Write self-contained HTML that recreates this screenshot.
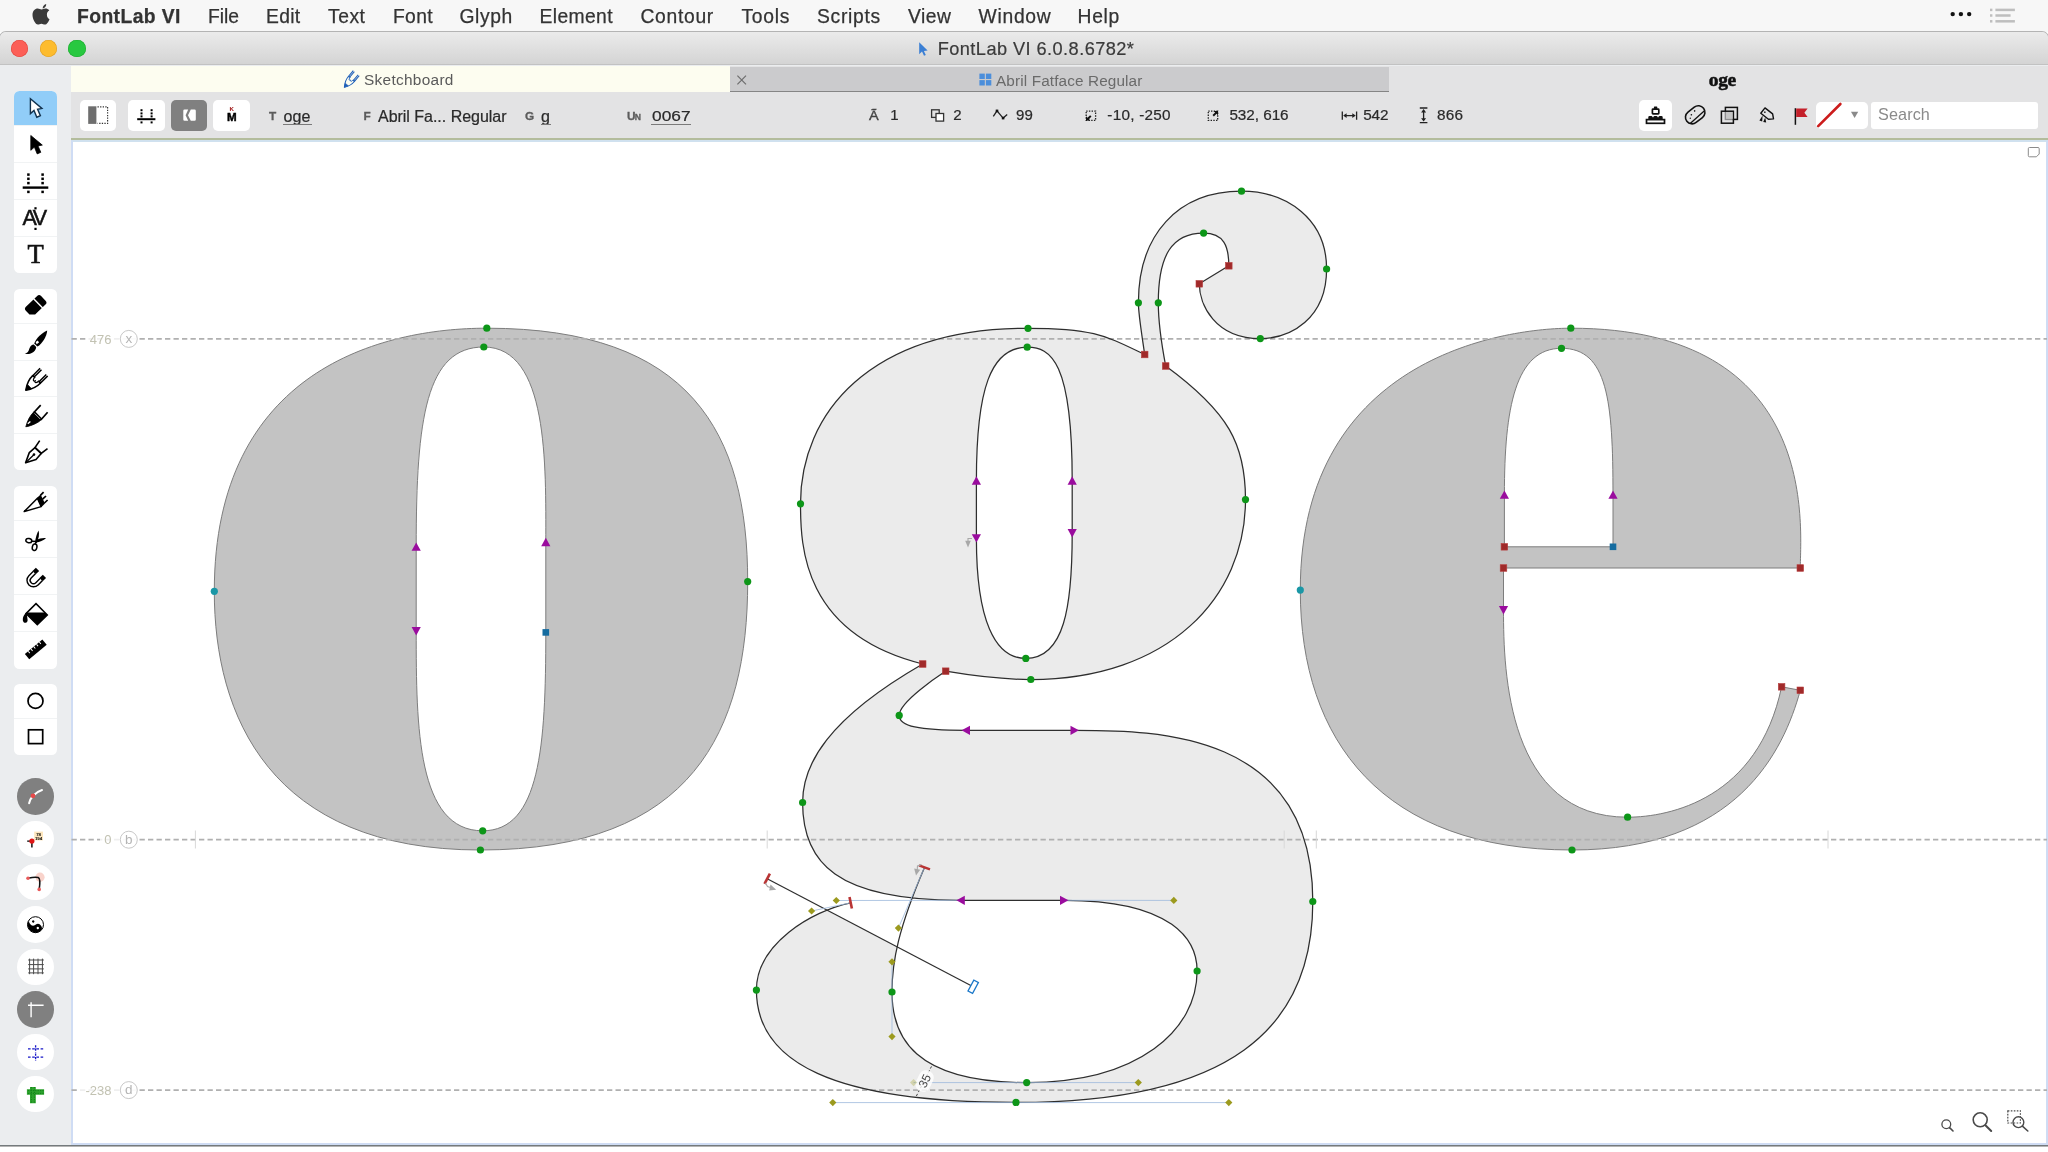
<!DOCTYPE html>
<html><head><meta charset="utf-8"><title>FontLab VI</title>
<style>
html,body{margin:0;padding:0;background:#fff;}
body{width:2048px;height:1152px;overflow:hidden;position:relative;font-family:"Liberation Sans",sans-serif;}
.a{position:absolute;}
.t{position:absolute;white-space:nowrap;}
svg{position:absolute;left:0;top:0;overflow:visible;}
.wb{position:absolute;background:#fff;}
</style></head><body>
<div id="root" style="position:absolute;left:0;top:0;width:2048px;height:1152px;will-change:transform;">

<div class="a" style="left:0;top:0;width:2048px;height:32px;background:#f7f7f7;"></div>
<span class="t " style="left:77.0px;top:4.8px;height:23.2px;line-height:23.2px;font-size:19.3px;color:#333;font-weight:bold;letter-spacing:0.430px;-webkit-text-stroke:0.25px #333;">FontLab VI</span>
<span class="t " style="left:208.0px;top:4.8px;height:23.2px;line-height:23.2px;font-size:19.3px;color:#333;letter-spacing:-0.025px;-webkit-text-stroke:0.25px #333;">File</span>
<span class="t " style="left:266.0px;top:4.8px;height:23.2px;line-height:23.2px;font-size:19.3px;color:#333;letter-spacing:0.311px;-webkit-text-stroke:0.25px #333;">Edit</span>
<span class="t " style="left:328.0px;top:4.8px;height:23.2px;line-height:23.2px;font-size:19.3px;color:#333;letter-spacing:0.526px;-webkit-text-stroke:0.25px #333;">Text</span>
<span class="t " style="left:393.0px;top:4.8px;height:23.2px;line-height:23.2px;font-size:19.3px;color:#333;letter-spacing:0.345px;-webkit-text-stroke:0.25px #333;">Font</span>
<span class="t " style="left:459.5px;top:4.8px;height:23.2px;line-height:23.2px;font-size:19.3px;color:#333;letter-spacing:0.616px;-webkit-text-stroke:0.25px #333;">Glyph</span>
<span class="t " style="left:539.5px;top:4.8px;height:23.2px;line-height:23.2px;font-size:19.3px;color:#333;letter-spacing:0.385px;-webkit-text-stroke:0.25px #333;">Element</span>
<span class="t " style="left:640.5px;top:4.8px;height:23.2px;line-height:23.2px;font-size:19.3px;color:#333;letter-spacing:0.691px;-webkit-text-stroke:0.25px #333;">Contour</span>
<span class="t " style="left:741.5px;top:4.8px;height:23.2px;line-height:23.2px;font-size:19.3px;color:#333;letter-spacing:0.689px;-webkit-text-stroke:0.25px #333;">Tools</span>
<span class="t " style="left:817.0px;top:4.8px;height:23.2px;line-height:23.2px;font-size:19.3px;color:#333;letter-spacing:0.717px;-webkit-text-stroke:0.25px #333;">Scripts</span>
<span class="t " style="left:908.0px;top:4.8px;height:23.2px;line-height:23.2px;font-size:19.3px;color:#333;letter-spacing:0.504px;-webkit-text-stroke:0.25px #333;">View</span>
<span class="t " style="left:978.5px;top:4.8px;height:23.2px;line-height:23.2px;font-size:19.3px;color:#333;letter-spacing:0.726px;-webkit-text-stroke:0.25px #333;">Window</span>
<span class="t " style="left:1077.5px;top:4.8px;height:23.2px;line-height:23.2px;font-size:19.3px;color:#333;letter-spacing:0.702px;-webkit-text-stroke:0.25px #333;">Help</span>
<div class="a" style="left:0;top:31.5px;width:2048px;height:1114.5px;background:#ebedef;border-radius:6px 6px 0 0;box-shadow:0 0 0 1px #b4b4b4;overflow:hidden;">
<div class="a" style="left:0;top:0;width:2048px;height:32px;background:linear-gradient(#ebebeb,#d4d4d4);border-bottom:1px solid #c2c2c2;"></div>
</div>
<div class="a" style="left:0;top:1145px;width:2048px;height:1.2px;background:#747a7c;"></div>
<div class="a" style="left:0;top:1146.5px;width:2048px;height:6px;background:#fff;"></div>
<div class="a" style="left:11.35px;top:39.55px;width:17.1px;height:17.1px;border-radius:50%;background:#fc5f57;box-shadow:inset 0 0 0 0.6px #e2463f;"></div>
<div class="a" style="left:39.85px;top:39.55px;width:17.1px;height:17.1px;border-radius:50%;background:#fdbc2e;box-shadow:inset 0 0 0 0.6px #e0a028;"></div>
<div class="a" style="left:68.45px;top:39.55px;width:17.1px;height:17.1px;border-radius:50%;background:#28c840;box-shadow:inset 0 0 0 0.6px #1fab31;"></div>
<span class="t " style="left:937.7px;top:39.2px;height:21.8px;line-height:21.8px;font-size:18.2px;color:#3a3a3a;letter-spacing:0.436px;-webkit-text-stroke:0.2px #3a3a3a;">FontLab VI 6.0.8.6782*</span>
<div class="a" style="left:71px;top:66.4px;width:1977px;height:25.6px;background:#e3e3e4;"></div>
<div class="a" style="left:71px;top:66.4px;width:658.5px;height:25.8px;background:#fdfdf0;"></div>
<div class="a" style="left:729.5px;top:67px;width:659.5px;height:24px;background:#cbcbcd;border-bottom:1.5px solid #858585;"></div>
<span class="t " style="left:364.0px;top:71.0px;height:18.5px;line-height:18.5px;font-size:15.4px;color:#5a5a5a;letter-spacing:0.294px;">Sketchboard</span>
<span class="t " style="left:996.0px;top:71.8px;height:18.4px;line-height:18.4px;font-size:15.3px;color:#6a6a6a;letter-spacing:0.133px;">Abril Fatface Regular</span>
<span class="t" style="left:1708.8px;top:67.6px;font-size:19.5px;line-height:24px;font-weight:bold;font-family:'Liberation Serif',serif;color:#111;letter-spacing:-0.35px;-webkit-text-stroke:0.55px #111;">oge</span>
<div class="a" style="left:71px;top:92px;width:1977px;height:46.5px;background:#e3e3e4;"></div>
<div class="a" style="left:79.8px;top:99.7px;width:36.6px;height:30.9px;border-radius:5px;background:#fff;"></div>
<div class="a" style="left:128px;top:99.7px;width:36.8px;height:30.9px;border-radius:5px;background:#fff;"></div>
<div class="a" style="left:170.8px;top:99.7px;width:36.6px;height:30.9px;border-radius:5px;background:#808080;"></div>
<div class="a" style="left:213.4px;top:99.7px;width:36.6px;height:30.9px;border-radius:5px;background:#fff;"></div>
<div class="a" style="left:1638.5px;top:99.5px;width:33.7px;height:31.2px;border-radius:5px;background:#fff;"></div>
<div class="a" style="left:1815.5px;top:102px;width:52.5px;height:26.8px;border-radius:5px;background:#fff;"></div>
<div class="a" style="left:1870.5px;top:101.5px;width:167.5px;height:27px;border-radius:3px;background:#fff;"></div>
<span class="t " style="left:1878.0px;top:105.3px;height:19.4px;line-height:19.4px;font-size:16.2px;color:#8a8a8a;letter-spacing:0.112px;">Search</span>
<span class="t " style="left:268.9px;top:109.4px;height:14.2px;line-height:14.2px;font-size:11.8px;color:#5c5c5c;font-weight:bold;-webkit-text-stroke:0.3px #5c5c5c;">T</span>
<span class="t " style="left:283.6px;top:107.2px;height:19.2px;line-height:19.2px;font-size:16px;color:#2a2a2a;letter-spacing:0.035px;-webkit-text-stroke:0.22px #2a2a2a;">oge</span>
<div class="a" style="left:283.2px;top:124px;width:28.4px;height:1px;background:#7a7a7a;"></div>
<span class="t " style="left:363.6px;top:109.4px;height:14.2px;line-height:14.2px;font-size:11.8px;color:#5c5c5c;font-weight:bold;-webkit-text-stroke:0.3px #5c5c5c;">F</span>
<span class="t " style="left:378.0px;top:107.2px;height:19.2px;line-height:19.2px;font-size:16px;color:#2a2a2a;letter-spacing:-0.023px;-webkit-text-stroke:0.22px #2a2a2a;">Abril Fa... Regular</span>
<span class="t " style="left:525.0px;top:109.4px;height:14.2px;line-height:14.2px;font-size:11.8px;color:#5c5c5c;font-weight:bold;-webkit-text-stroke:0.3px #5c5c5c;">G</span>
<span class="t " style="left:541.0px;top:107.2px;height:19.2px;line-height:19.2px;font-size:16px;color:#2a2a2a;-webkit-text-stroke:0.22px #2a2a2a;">g</span>
<div class="a" style="left:540.6px;top:124px;width:10px;height:1px;background:#7a7a7a;"></div>
<span class="t " style="left:627.0px;top:109.4px;height:14.2px;line-height:14.2px;font-size:11.8px;color:#5c5c5c;font-weight:bold;-webkit-text-stroke:0.3px #5c5c5c;">U</span>
<span class="t " style="left:634.8px;top:112.4px;height:10.3px;line-height:10.3px;font-size:8.6px;color:#5c5c5c;font-weight:bold;-webkit-text-stroke:0.3px #5c5c5c;">N</span>
<span class="t " style="left:651.7px;top:106.5px;height:18.2px;line-height:18.2px;font-size:15.2px;color:#2a2a2a;-webkit-text-stroke:0.22px #2a2a2a;transform:scaleX(1.14);transform-origin:0 50%;">0067</span>
<div class="a" style="left:651.2px;top:124px;width:40px;height:1px;background:#7a7a7a;"></div>
<span class="t " style="left:869.4px;top:107.8px;height:15.6px;line-height:15.6px;font-size:13px;color:#444;-webkit-text-stroke:0.35px #444;transform:scaleX(1.12);transform-origin:0 50%;">Ã</span>
<span class="t " style="left:890.3px;top:106.3px;height:18.0px;line-height:18.0px;font-size:15px;color:#2a2a2a;-webkit-text-stroke:0.22px #2a2a2a;">1</span>
<span class="t " style="left:953.2px;top:106.3px;height:18.0px;line-height:18.0px;font-size:15px;color:#2a2a2a;-webkit-text-stroke:0.22px #2a2a2a;">2</span>
<span class="t " style="left:1016.0px;top:106.3px;height:18.0px;line-height:18.0px;font-size:15px;color:#2a2a2a;letter-spacing:0.058px;-webkit-text-stroke:0.22px #2a2a2a;">99</span>
<span class="t " style="left:1107.3px;top:106.1px;height:18.4px;line-height:18.4px;font-size:15.3px;color:#2a2a2a;letter-spacing:0.251px;-webkit-text-stroke:0.22px #2a2a2a;">-10, -250</span>
<span class="t " style="left:1229.4px;top:106.1px;height:18.4px;line-height:18.4px;font-size:15.3px;color:#2a2a2a;letter-spacing:-0.045px;-webkit-text-stroke:0.22px #2a2a2a;">532, 616</span>
<span class="t " style="left:1363.2px;top:106.1px;height:18.4px;line-height:18.4px;font-size:15.3px;color:#2a2a2a;letter-spacing:-0.109px;-webkit-text-stroke:0.22px #2a2a2a;">542</span>
<span class="t " style="left:1437.0px;top:106.1px;height:18.4px;line-height:18.4px;font-size:15.3px;color:#2a2a2a;letter-spacing:0.224px;-webkit-text-stroke:0.22px #2a2a2a;">866</span>
<div class="a" style="left:71px;top:139px;width:1977px;height:1006px;background:#fff;box-sizing:border-box;border:2.9px solid #cfdcf4;border-top:3px solid #d0e1ef;"></div>
<div class="a" style="left:71px;top:138px;width:1977px;height:1.5px;background:#b3bc9c;"></div>
<svg width="2048" height="1152" viewBox="0 0 2048 1152" style="font-family:'Liberation Sans',sans-serif">
<path d="M214.3,591.3C214.3,369.7 381.9,328.2 486.8,328.2C690.8,328.2 747.7,433.2 747.7,581.6C747.7,729.9 693.2,850.0 480.4,850.0C269.9,850.0 214.3,715.4 214.3,591.3ZM483.8,347.0C548.7,347.0 545.8,465.7 545.8,542.0L545.8,632.4C545.8,746.1 540.1,830.8 482.7,830.8C417.1,830.8 416.2,727.2 416.2,631.2L416.2,546.6C416.2,417.9 426.2,347.0 483.8,347.0Z" fill="#c3c3c3" stroke="#7d7d7d" stroke-width="1" fill-rule="evenodd"/>
<path d="M1800.3,568.0C1800.3,528.1 1821.7,328.2 1570.8,328.2C1513.2,328.2 1300.3,352.1 1300.3,590.1C1300.3,741.4 1383.0,850.0 1572.0,850.0C1737.1,850.0 1783.6,751.1 1800.3,690.3L1781.6,686.8C1758.1,798.7 1669.7,817.2 1627.6,817.2C1507.2,817.2 1503.5,671.4 1503.5,610.3L1503.5,568.0L1800.3,568.0ZM1504.4,546.8L1504.4,494.6C1504.4,407.9 1515.3,348.3 1561.5,348.3C1607.6,348.3 1613.0,400.9 1613.0,494.6L1613.0,546.8L1504.4,546.8Z" fill="#c3c3c3" stroke="#7d7d7d" stroke-width="1" fill-rule="evenodd"/>
<path d="M827.0,910.1C792.5,924.1 756.4,952.8 756.4,990.1C756.4,1062.3 832.8,1102.6 1016.0,1102.4C1228.8,1102.6 1312.8,1029.3 1312.8,901.5C1312.8,731.2 1156.5,730.3 1074.7,730.3L965.8,730.3C918.6,730.3 899.2,726.2 899.2,715.4C899.2,700.8 945.5,671.4 945.7,671.2C972.3,675.7 1002.9,679.5 1030.8,679.5C1168.7,679.5 1245.5,597.2 1245.5,499.6C1245.5,444.4 1228.7,412.1 1165.7,366.0C1162.1,347.2 1158.3,319.4 1158.3,302.8C1158.3,255.7 1171.6,233.1 1203.6,233.1C1223.9,233.1 1228.8,246.1 1228.8,265.8L1199.3,283.8C1199.3,304.1 1214.7,338.6 1260.3,338.6C1290.2,338.6 1326.6,319.0 1326.6,269.0C1326.6,219.5 1287.3,191.2 1241.5,191.2C1177.5,191.2 1138.4,235.1 1138.4,302.8C1138.4,313.6 1139.7,320.4 1144.7,354.5C1106.2,336.1 1094.7,328.3 1028.0,328.3C869.2,328.3 800.5,413.9 800.5,503.8C800.5,546.2 802.7,634.0 922.7,664.0C826.9,719.2 802.6,764.9 802.6,802.5C802.6,862.6 836.3,900.5 960.6,900.3L1064.2,900.3C1173.8,900.4 1197.1,940.8 1197.1,971.0C1197.1,1030.3 1138.3,1082.6 1026.7,1082.6C913.6,1082.6 892.0,1036.6 892.0,992.0C892.0,978.4 893.3,964.1 897.1,946.9ZM1027.2,347.2C1050.7,347.2 1072.2,361.2 1072.2,480.5L1072.2,533.2C1072.2,607.1 1064.2,658.4 1025.8,658.4C994.8,658.4 976.4,619.8 976.4,538.4L976.4,480.5C976.4,389.3 990.6,347.2 1027.2,347.2Z" fill="#ebebeb" stroke="none" fill-rule="evenodd"/>
<path d="M71.5,338.9H2047" stroke="#b0b0b0" stroke-width="1.8" stroke-dasharray="5.3,3.2" fill="none"/>
<path d="M71.5,839.7H2047" stroke="#b0b0b0" stroke-width="1.8" stroke-dasharray="5.3,3.2" fill="none"/>
<path d="M71.5,1090.1H2047" stroke="#b0b0b0" stroke-width="1.8" stroke-dasharray="5.3,3.2" fill="none"/>
<path d="M195.4,830.5V848.5" stroke="#d8d8d8" stroke-width="1"/>
<path d="M767.2,830.5V848.5" stroke="#d8d8d8" stroke-width="1"/>
<path d="M1284.2,830.5V848.5" stroke="#d8d8d8" stroke-width="1"/>
<path d="M1316.3,830.5V848.5" stroke="#d8d8d8" stroke-width="1"/>
<path d="M1828,830.5V848.5" stroke="#d8d8d8" stroke-width="1"/>
<path d="M850.7,902.8C811.6,911.0 756.4,944.0 756.4,990.1C756.4,1062.3 832.8,1102.6 1016.0,1102.4C1228.8,1102.6 1312.8,1029.3 1312.8,901.5C1312.8,731.2 1156.5,730.3 1074.7,730.3L965.8,730.3C918.6,730.3 899.2,726.2 899.2,715.4C899.2,700.8 945.5,671.4 945.7,671.2C972.3,675.7 1002.9,679.5 1030.8,679.5C1168.7,679.5 1245.5,597.2 1245.5,499.6C1245.5,444.4 1228.7,412.1 1165.7,366.0C1162.1,347.2 1158.3,319.4 1158.3,302.8C1158.3,255.7 1171.6,233.1 1203.6,233.1C1223.9,233.1 1228.8,246.1 1228.8,265.8L1199.3,283.8C1199.3,304.1 1214.7,338.6 1260.3,338.6C1290.2,338.6 1326.6,319.0 1326.6,269.0C1326.6,219.5 1287.3,191.2 1241.5,191.2C1177.5,191.2 1138.4,235.1 1138.4,302.8C1138.4,313.6 1139.7,320.4 1144.7,354.5C1106.2,336.1 1094.7,328.3 1028.0,328.3C869.2,328.3 800.5,413.9 800.5,503.8C800.5,546.2 802.7,634.0 922.7,664.0C826.9,719.2 802.6,764.9 802.6,802.5C802.6,862.6 836.3,900.5 960.6,900.3L1064.2,900.3C1173.8,900.4 1197.1,940.8 1197.1,971.0C1197.1,1030.3 1138.3,1082.6 1026.7,1082.6C913.6,1082.6 892.0,1036.6 892.0,992.0C892.0,961.8 898.4,928.1 924.5,867.4" fill="none" stroke="#2e2e2e" stroke-width="1.25" stroke-linejoin="round"/>
<path d="M1027.2,347.2C1050.7,347.2 1072.2,361.2 1072.2,480.5L1072.2,533.2C1072.2,607.1 1064.2,658.4 1025.8,658.4C994.8,658.4 976.4,619.8 976.4,538.4L976.4,480.5C976.4,389.3 990.6,347.2 1027.2,347.2Z" fill="none" stroke="#2e2e2e" stroke-width="1.25"/>
<path d="M767.2,878.8L973.2,986.7" fill="none" stroke="#2e2e2e" stroke-width="1.25"/>
<rect x="86.5" y="331.9" width="51.5" height="14" fill="#fff" opacity="0.8"/>
<text x="111.5" y="343.5" font-size="13" fill="#c2c2b2" text-anchor="end">476</text>
<circle cx="128.8" cy="338.9" r="8.5" fill="#fff" fill-opacity="0.7" stroke="#c8c8c8" stroke-width="1"/>
<text x="128.8" y="343.09999999999997" font-size="13.5" fill="#b4b4b4" text-anchor="middle">x</text>
<rect x="100" y="832.7" width="38" height="14" fill="#fff" opacity="0.8"/>
<text x="111.5" y="844.3000000000001" font-size="13" fill="#c2c2b2" text-anchor="end">0</text>
<circle cx="128.8" cy="839.7" r="8.5" fill="#fff" fill-opacity="0.7" stroke="#c8c8c8" stroke-width="1"/>
<text x="128.8" y="843.9000000000001" font-size="13.5" fill="#b4b4b4" text-anchor="middle">b</text>
<rect x="78" y="1083.1" width="60" height="14" fill="#fff" opacity="0.8"/>
<text x="111.5" y="1094.6999999999998" font-size="13" fill="#c2c2b2" text-anchor="end">-238</text>
<circle cx="128.8" cy="1090.1" r="8.5" fill="#fff" fill-opacity="0.7" stroke="#c8c8c8" stroke-width="1"/>
<text x="128.8" y="1094.3" font-size="13.5" fill="#b4b4b4" text-anchor="middle">d</text>
<path d="M850.7,902.8L811.6,911" stroke="#9db9dc" stroke-width="1" opacity="0.8"/>
<path d="M960.6,900.3L836.3,900.5" stroke="#9db9dc" stroke-width="1" opacity="0.8"/>
<path d="M1064.2,900.3L1173.8,900.4" stroke="#9db9dc" stroke-width="1" opacity="0.8"/>
<path d="M924.5,867.4L898.4,928.1" stroke="#9db9dc" stroke-width="1" opacity="0.8"/>
<path d="M892,961.8L892,1036.6" stroke="#9db9dc" stroke-width="1" opacity="0.8"/>
<path d="M913.6,1082.6L1138.3,1082.6" stroke="#9db9dc" stroke-width="1" opacity="0.8"/>
<path d="M832.8,1102.6L1228.8,1102.6" stroke="#9db9dc" stroke-width="1" opacity="0.8"/>
<path d="M916.4,1096L931.8,1065.8" stroke="#444" stroke-width="1" stroke-dasharray="2.4,2"/>
<g transform="translate(924.6,1081) rotate(-64)"><rect x="-11" y="-7.5" width="22" height="15" rx="7" fill="#fff" fill-opacity="0.8"/><text x="0" y="4.2" font-size="12" fill="#4a4a4a" text-anchor="middle">35</text></g>
<path d="M808.0,911L811.6,907.4L815.2,911L811.6,914.6Z" fill="#9c9a1e" opacity="1"/>
<path d="M832.6999999999999,900.5L836.3,896.9L839.9,900.5L836.3,904.1Z" fill="#9c9a1e" opacity="1"/>
<path d="M1170.2,900.4L1173.8,896.8L1177.3999999999999,900.4L1173.8,904.0Z" fill="#9c9a1e" opacity="1"/>
<path d="M894.8,928.1L898.4,924.5L902.0,928.1L898.4,931.7Z" fill="#9c9a1e" opacity="1"/>
<path d="M888.4,961.8L892,958.1999999999999L895.6,961.8L892,965.4Z" fill="#9c9a1e" opacity="1"/>
<path d="M888.4,1036.6L892,1033.0L895.6,1036.6L892,1040.1999999999998Z" fill="#9c9a1e" opacity="1"/>
<path d="M910.0,1082.6L913.6,1079.0L917.2,1082.6L913.6,1086.1999999999998Z" fill="#9c9a1e" opacity="0.3"/>
<path d="M1134.7,1082.6L1138.3,1079.0L1141.8999999999999,1082.6L1138.3,1086.1999999999998Z" fill="#9c9a1e" opacity="1"/>
<path d="M829.1999999999999,1102.6L832.8,1099.0L836.4,1102.6L832.8,1106.1999999999998Z" fill="#9c9a1e" opacity="1"/>
<path d="M1225.2,1102.6L1228.8,1099.0L1232.3999999999999,1102.6L1228.8,1106.1999999999998Z" fill="#9c9a1e" opacity="1"/>
<circle cx="486.8" cy="328.2" r="3.6" fill="#0d9618"/>
<circle cx="480.4" cy="850" r="3.6" fill="#0d9618"/>
<circle cx="747.7" cy="581.6" r="3.6" fill="#0d9618"/>
<circle cx="483.8" cy="347" r="3.6" fill="#0d9618"/>
<circle cx="482.7" cy="830.8" r="3.6" fill="#0d9618"/>
<circle cx="1028" cy="328.3" r="3.6" fill="#0d9618"/>
<circle cx="800.5" cy="503.8" r="3.6" fill="#0d9618"/>
<circle cx="1030.8" cy="679.5" r="3.6" fill="#0d9618"/>
<circle cx="1245.5" cy="499.6" r="3.6" fill="#0d9618"/>
<circle cx="1027.2" cy="347.2" r="3.6" fill="#0d9618"/>
<circle cx="1025.8" cy="658.4" r="3.6" fill="#0d9618"/>
<circle cx="1138.4" cy="302.8" r="3.6" fill="#0d9618"/>
<circle cx="1158.3" cy="302.8" r="3.6" fill="#0d9618"/>
<circle cx="1203.6" cy="233.1" r="3.6" fill="#0d9618"/>
<circle cx="1241.5" cy="191.2" r="3.6" fill="#0d9618"/>
<circle cx="1326.6" cy="269" r="3.6" fill="#0d9618"/>
<circle cx="1260.3" cy="338.6" r="3.6" fill="#0d9618"/>
<circle cx="899.2" cy="715.4" r="3.6" fill="#0d9618"/>
<circle cx="802.6" cy="802.5" r="3.6" fill="#0d9618"/>
<circle cx="756.4" cy="990.1" r="3.6" fill="#0d9618"/>
<circle cx="1016" cy="1102.4" r="3.6" fill="#0d9618"/>
<circle cx="1312.8" cy="901.5" r="3.6" fill="#0d9618"/>
<circle cx="1197.1" cy="971" r="3.6" fill="#0d9618"/>
<circle cx="1026.7" cy="1082.6" r="3.6" fill="#0d9618"/>
<circle cx="892" cy="992" r="3.6" fill="#0d9618"/>
<circle cx="1570.8" cy="328.2" r="3.6" fill="#0d9618"/>
<circle cx="1572" cy="850" r="3.6" fill="#0d9618"/>
<circle cx="1561.5" cy="348.3" r="3.6" fill="#0d9618"/>
<circle cx="1627.6" cy="817.2" r="3.6" fill="#0d9618"/>
<circle cx="214.3" cy="591.3" r="3.6" fill="#1a97a6"/>
<circle cx="1300.3" cy="590.1" r="3.6" fill="#1a97a6"/>
<rect x="1141.4" y="351.2" width="6.6" height="6.6" fill="#a02a2a" stroke="#b84040" stroke-width="0.6"/>
<rect x="1162.4" y="362.7" width="6.6" height="6.6" fill="#a02a2a" stroke="#b84040" stroke-width="0.6"/>
<rect x="1225.5" y="262.5" width="6.6" height="6.6" fill="#a02a2a" stroke="#b84040" stroke-width="0.6"/>
<rect x="1196.0" y="280.5" width="6.6" height="6.6" fill="#a02a2a" stroke="#b84040" stroke-width="0.6"/>
<rect x="919.4" y="660.7" width="6.6" height="6.6" fill="#a02a2a" stroke="#b84040" stroke-width="0.6"/>
<rect x="942.4" y="667.9" width="6.6" height="6.6" fill="#a02a2a" stroke="#b84040" stroke-width="0.6"/>
<rect x="1501.1" y="543.5" width="6.6" height="6.6" fill="#a02a2a" stroke="#b84040" stroke-width="0.6"/>
<rect x="1500.2" y="564.7" width="6.6" height="6.6" fill="#a02a2a" stroke="#b84040" stroke-width="0.6"/>
<rect x="1797.0" y="564.7" width="6.6" height="6.6" fill="#a02a2a" stroke="#b84040" stroke-width="0.6"/>
<rect x="1778.3" y="683.5" width="6.6" height="6.6" fill="#a02a2a" stroke="#b84040" stroke-width="0.6"/>
<rect x="1797.0" y="687.0" width="6.6" height="6.6" fill="#a02a2a" stroke="#b84040" stroke-width="0.6"/>
<rect x="542.5" y="629.1" width="6.6" height="6.6" fill="#156ca0"/>
<rect x="1609.7" y="543.5" width="6.6" height="6.6" fill="#156ca0"/>
<path d="M411.59999999999997,550.8000000000001L420.8,550.8000000000001L416.2,542.4Z" fill="#9a0c9e"/>
<path d="M411.59999999999997,627.0L420.8,627.0L416.2,635.4000000000001Z" fill="#9a0c9e"/>
<path d="M541.1999999999999,546.2L550.4,546.2L545.8,537.8Z" fill="#9a0c9e"/>
<path d="M971.8,484.7L981.0,484.7L976.4,476.3Z" fill="#9a0c9e"/>
<path d="M971.8,534.1999999999999L981.0,534.1999999999999L976.4,542.6Z" fill="#9a0c9e"/>
<path d="M1067.6000000000001,484.7L1076.8,484.7L1072.2,476.3Z" fill="#9a0c9e"/>
<path d="M1067.6000000000001,529.0L1076.8,529.0L1072.2,537.4000000000001Z" fill="#9a0c9e"/>
<path d="M970.0,725.6999999999999L970.0,734.9L961.5999999999999,730.3Z" fill="#9a0c9e"/>
<path d="M1070.5,725.6999999999999L1070.5,734.9L1078.9,730.3Z" fill="#9a0c9e"/>
<path d="M964.8000000000001,895.6999999999999L964.8000000000001,904.9L956.4,900.3Z" fill="#9a0c9e"/>
<path d="M1060.0,895.6999999999999L1060.0,904.9L1068.4,900.3Z" fill="#9a0c9e"/>
<path d="M1499.8000000000002,498.8L1509.0,498.8L1504.4,490.40000000000003Z" fill="#9a0c9e"/>
<path d="M1608.4,498.8L1617.6,498.8L1613,490.40000000000003Z" fill="#9a0c9e"/>
<path d="M1498.9,606.0999999999999L1508.1,606.0999999999999L1503.5,614.5Z" fill="#9a0c9e"/>
<path d="M849.5,897.1L851.9,908.5" stroke="#b93434" stroke-width="2.6"/>
<path d="M919.0,865.4L930.0,869.4" stroke="#b93434" stroke-width="2.6"/>
<path d="M764.5,883.9L769.9,873.7" stroke="#b93434" stroke-width="2.6"/>
<path d="M765.5,883L767.5,886.5L772,888" stroke="#a8a8a8" stroke-width="1.1" fill="none"/><path d="M770.5,884.6L776.2,889.8L769.2,890.5Z" fill="#a8a8a8"/>
<path d="M921.5,864.5L917.5,866L917.2,870" stroke="#a8a8a8" stroke-width="1.1" fill="none"/><path d="M914.2,868.5L920.2,869.8L916,875.5Z" fill="#a8a8a8"/>
<path d="M972,538.5H968V542" stroke="#a8a8a8" stroke-width="1.1" fill="none"/><path d="M965.2,540.8H970.8L968,547.5Z" fill="#a8a8a8"/>
<g transform="translate(973.2,986.7) rotate(-62)"><rect x="-6.2" y="-2.6" width="12.4" height="5.2" fill="#fff" stroke="#1b78c9" stroke-width="1.3"/></g>
<path d="M2029.5,147.5h8.5a1.2,1.2 0 0 1 1.2,1.2v5.3l-2.8,2.8h-6.9a1.2,1.2 0 0 1 -1.2,-1.2v-6.9a1.2,1.2 0 0 1 1.2,-1.2z" fill="#fff" stroke="#8a8a8a" stroke-width="1"/>
<g fill="none" stroke="#4a4a4a" stroke-linecap="round"><circle cx="1946.3" cy="1124.2" r="4.4" stroke-width="1.3"/><path d="M1949.6,1127.6L1953,1131" stroke-width="1.6"/><circle cx="1980.2" cy="1119.8" r="7" stroke-width="1.6"/><path d="M1985.4,1125.2L1991.2,1131" stroke-width="2"/><rect x="2007.8" y="1110.8" width="12.6" height="12.2" stroke-width="1.2" stroke-dasharray="1.6,1.4" stroke-linecap="butt"/><circle cx="2018.4" cy="1122.2" r="5.4" stroke-width="1.4"/><path d="M2022.4,1126.2L2027.8,1131" stroke-width="1.6"/></g>
</svg>
<div class="a" style="left:14.3px;top:90.8px;width:42.7px;height:182.2px;background:#fff;border-radius:5.5px;overflow:hidden;">
<div class="a" style="left:0;top:0;width:43px;height:34.4px;background:#91cdf8;"></div>
<div class="a" style="left:0;top:33.9px;width:43px;height:1px;background:#f1f3f4;"></div>
<div class="a" style="left:0;top:70.8px;width:43px;height:1px;background:#f1f3f4;"></div>
<div class="a" style="left:0;top:107.8px;width:43px;height:1px;background:#f1f3f4;"></div>
<div class="a" style="left:0;top:144.8px;width:43px;height:1px;background:#f1f3f4;"></div>
</div>
<div class="a" style="left:14.3px;top:288.9px;width:42.7px;height:181.6px;background:#fff;border-radius:5.5px;overflow:hidden;">
<div class="a" style="left:0;top:33.9px;width:43px;height:1px;background:#f1f3f4;"></div>
<div class="a" style="left:0;top:70.7px;width:43px;height:1px;background:#f1f3f4;"></div>
<div class="a" style="left:0;top:107.5px;width:43px;height:1px;background:#f1f3f4;"></div>
<div class="a" style="left:0;top:144.3px;width:43px;height:1px;background:#f1f3f4;"></div>
</div>
<div class="a" style="left:14.3px;top:486.1px;width:42.7px;height:182.5px;background:#fff;border-radius:5.5px;overflow:hidden;">
<div class="a" style="left:0;top:33.9px;width:43px;height:1px;background:#f1f3f4;"></div>
<div class="a" style="left:0;top:70.9px;width:43px;height:1px;background:#f1f3f4;"></div>
<div class="a" style="left:0;top:107.9px;width:43px;height:1px;background:#f1f3f4;"></div>
<div class="a" style="left:0;top:145.0px;width:43px;height:1px;background:#f1f3f4;"></div>
</div>
<div class="a" style="left:14.3px;top:683.9px;width:42.7px;height:71.1px;background:#fff;border-radius:5.5px;overflow:hidden;">
<div class="a" style="left:0;top:33.9px;width:43px;height:1px;background:#f1f3f4;"></div>
</div>
<div class="a" style="left:17.2px;top:778.0px;width:36.6px;height:36.6px;border-radius:50%;background:#808080;"></div>
<div class="a" style="left:17.2px;top:820.9px;width:36.6px;height:36.6px;border-radius:50%;background:#fff;"></div>
<div class="a" style="left:17.2px;top:863.5px;width:36.6px;height:36.6px;border-radius:50%;background:#fff;"></div>
<div class="a" style="left:17.2px;top:906.2px;width:36.6px;height:36.6px;border-radius:50%;background:#fff;"></div>
<div class="a" style="left:17.2px;top:948.9px;width:36.6px;height:36.6px;border-radius:50%;background:#fff;"></div>
<div class="a" style="left:17.2px;top:991.3px;width:36.6px;height:36.6px;border-radius:50%;background:#808080;"></div>
<div class="a" style="left:17.2px;top:1033.7px;width:36.6px;height:36.6px;border-radius:50%;background:#fff;"></div>
<div class="a" style="left:17.2px;top:1075.7px;width:36.6px;height:36.6px;border-radius:50%;background:#fff;"></div>
<span class="t" style="left:22.4px;top:206.4px;font-size:21.5px;line-height:24px;letter-spacing:-2.3px;color:#111;-webkit-text-stroke:0.5px #111;">AV</span>
<span class="t" style="left:27.4px;top:239.2px;font-size:26.5px;line-height:30px;font-family:'Liberation Serif',serif;color:#111;-webkit-text-stroke:0.7px #111;">T</span>
<svg width="72" height="1152" viewBox="0 0 72 1152">
<path d="M30.4,98.8V113.6L34,110.4L36.8,117.2L40.4,115.6L37.6,109.2L41.9,108.4Z" fill="#fff" stroke="#12324e" stroke-width="1.4" stroke-linejoin="miter"/>
<path d="M30.4,98.8V113.6L34,110.4L36.8,117.2L40.4,115.6L37.6,109.2L41.9,108.4Z" transform="translate(0.4,36.7)" fill="#000" stroke="#000" stroke-width="0.8"/>
<path d="M22.7,187.6H48.3" stroke="#000" stroke-width="2.4"/>
<rect x="27.15" y="173.35" width="2.5" height="2.5" fill="#000"/>
<rect x="27.15" y="177.55" width="2.5" height="2.5" fill="#000"/>
<rect x="27.15" y="181.85" width="2.5" height="2.5" fill="#000"/>
<rect x="27.15" y="190.65" width="2.5" height="2.5" fill="#000"/>
<rect x="41.35" y="173.35" width="2.5" height="2.5" fill="#000"/>
<rect x="41.35" y="177.55" width="2.5" height="2.5" fill="#000"/>
<rect x="41.35" y="181.85" width="2.5" height="2.5" fill="#000"/>
<rect x="41.35" y="190.65" width="2.5" height="2.5" fill="#000"/>
<rect x="34.4" y="207.20000000000002" width="2.2" height="2.2" fill="#000"/>
<rect x="34.4" y="227.8" width="2.2" height="2.2" fill="#000"/>
<g transform="translate(35.7,305.7) rotate(-44)"><path d="M-10.6,-3.2a2.8,2.8 0 0 1 2.8,-2.8h15.6a2.8,2.8 0 0 1 2.8,2.8v6.4a2.8,2.8 0 0 1 -2.8,2.8h-14.4l-4,-4z" fill="#000"/><path d="M3.4,-6.5V6.5" stroke="#fff" stroke-width="1.4"/></g>
<path d="M47.2,330.4C46.8,336.5 42.2,343.6 37.4,346.6L34.2,343.4C36.2,338 42,332.6 47.2,330.4Z" fill="#000"/>
<path d="M35.6,342L37.8,340.4L39,342.6L36.6,344.2Z" fill="#fff"/>
<path d="M33.8,344.6L36.2,347C35.8,351.5 31,355.2 24.6,353.8C28.5,352.8 28.6,350.5 29.5,348.2C30.3,346 32,344.8 33.8,344.6Z" fill="#000"/>
<g transform="translate(25.8,390.2) rotate(-45) scale(1.0)" fill="none" stroke="#000" stroke-linecap="butt"><path d="M15.5,-5.4C9.5,-5.6 3.5,-2.6 0,0C3.5,2.6 9.5,5.6 15.5,5.4" stroke-width="1.5" stroke-linejoin="round"/><path d="M0,0L5.2,-2.7V2.7Z" fill="#000" stroke-width="0.6"/><path d="M14.5,-4.4H25.6M14.5,4.4H25.6" stroke-width="3.4"/><path d="M16.5,-4.4H26M16.5,4.4H26" stroke="#fff" stroke-width="0.7"/><path d="M16,-2.6C12.5,-3 11,-1 13.2,0C11,1 12.5,3 16,2.6" stroke-width="1.2"/></g>
<path d="M25.8,426.8C27.4,420.6 30.2,415.4 33.9,411.8L41.6,419.4C38,423 32,425.6 25.8,426.8Z" fill="#000" stroke="#000" stroke-width="0.8" stroke-linejoin="round"/>
<path d="M40.7,405.2L34.4,411.9L41.4,419.2L47.6,412.2" fill="none" stroke="#000" stroke-width="1.7" stroke-linejoin="miter"/>
<path d="M27.8,423.8L30.4,421.4" stroke="#fff" stroke-width="1.3"/>
<path d="M34.6,413.4L40.2,419" stroke="#fff" stroke-width="0.7"/>
<path d="M25.6,462.7L29.3,452.6L35,447.6L41.2,453.4L36,459.4Z" fill="#fff" stroke="#000" stroke-width="1.6" stroke-linejoin="round"/>
<path d="M25.6,462.7L33.6,455" stroke="#000" stroke-width="1.3"/><circle cx="34" cy="454.6" r="1.3" fill="#000"/>
<path d="M39.7,440.6L35,447.6L41.2,453.4L47.5,448.6" fill="none" stroke="#000" stroke-width="1.6"/>
<path d="M24.2,511.6L37.4,498.2L41.2,506.6Z" fill="#fff" stroke="#000" stroke-width="1.5" stroke-linejoin="round"/>
<path d="M36.9,497.9L40.6,494.6L45,503.4L41.5,507Z" fill="#000"/>
<path d="M40.4,495.4L43.6,492.2M42.6,499.2L46,496M44.4,503L47.6,500" stroke="#000" stroke-width="1.7"/>
<path d="M35,542.5C35.5,538 36.8,533.5 38.6,530.4C39.6,534 38.6,539 36.6,543Z" fill="#000"/>
<path d="M36.2,540.2C39,538.6 43,537.8 46,538.2C43.6,540.6 39.6,542 36.2,542.4Z" fill="#000"/>
<ellipse cx="28.8" cy="540.6" rx="3" ry="2.1" transform="rotate(12 28.8 540.6)" fill="#fff" stroke="#000" stroke-width="1.5"/>
<ellipse cx="34.6" cy="547.2" rx="2.3" ry="3.3" transform="rotate(12 34.6 547.2)" fill="#fff" stroke="#000" stroke-width="1.5"/>
<path d="M31.6,541.2L36.5,541.5L35,544.2" fill="none" stroke="#000" stroke-width="1.4"/>
<g transform="translate(34.2,579.6) rotate(45)"><path d="M-4.9,-5V1A4.9,4.9 0 0 0 4.9,1V-5" fill="none" stroke="#000" stroke-width="4.6"/><path d="M-4.9,-5.2V1A4.9,4.9 0 0 0 4.9,1V-5.2" fill="none" stroke="#fff" stroke-width="1.8"/><rect x="-7.2" y="-9.6" width="4.6" height="4.8" fill="#000"/><rect x="2.6" y="-9.6" width="4.6" height="4.8" fill="#000"/></g>
<path d="M36,603.6L47.3,615L37.3,624.8L26,613.6Z" fill="#fff" stroke="#000" stroke-width="1.5" stroke-linejoin="miter"/>
<path d="M26.6,612.6H45L47.3,615L37.3,624.8L26,613.6Z" fill="#000"/>
<path d="M26.2,612.8C24,614.5 22.6,617.5 22.8,620.2C23,622 24.4,623 25.6,622.8C27,622.6 27.8,621.4 27.6,619.8C27.4,617.6 26.8,615.5 27.2,613.2Z" fill="#000"/>
<g transform="translate(35.8,649.4) rotate(-40)"><rect x="-11.4" y="-3.4" width="22.8" height="6.8" fill="#000"/><path d="M-7,-3.4v2.4M-3.4,-3.4v2.4M0.2,-3.4v2.4M3.8,-3.4v2.4M7.4,-3.4v2.4" stroke="#fff" stroke-width="1"/></g>
<circle cx="35.5" cy="700.9" r="7.5" fill="none" stroke="#000" stroke-width="1.7"/>
<rect x="28.5" y="729.8" width="14.2" height="13.8" fill="none" stroke="#000" stroke-width="1.7"/>
<path d="M29.1,803.2C30,798.5 34.5,792.5 42,790" fill="none" stroke="#fff" stroke-width="2" stroke-linecap="round"/><circle cx="33" cy="795.8" r="2.4" fill="#e84a4a"/>
<rect x="34.2" y="831.6" width="8.8" height="8.8" fill="#fde6bd"/>
<path d="M27.2,841.1H31.9V847.6" fill="none" stroke="#000" stroke-width="1.4"/><circle cx="31.9" cy="841.1" r="2.6" fill="#e01616"/>
<text x="38.6" y="835.7" font-size="4.4" font-weight="bold" text-anchor="middle" fill="#000">78</text><text x="38.6" y="839.8" font-size="4.4" font-weight="bold" text-anchor="middle" fill="#000">194</text>
<circle cx="40" cy="877.2" r="4.6" fill="#f9d3cb"/>
<path d="M28,878.2C31,877.6 36,877 38.2,877.6C40.4,878.4 40,884 39.2,889.4" fill="none" stroke="#111" stroke-width="1.6"/>
<circle cx="28" cy="878.2" r="1.8" fill="#e85a5a"/><circle cx="39.2" cy="889.4" r="1.8" fill="#e85a5a"/>
<circle cx="35.5" cy="924.7" r="8" fill="#fff" stroke="#000" stroke-width="1"/>
<g transform="rotate(-35 35.5 924.7)"><path d="M35.5,916.7A8,8 0 0 0 35.5,932.7A4.0,4.0 0 0 0 35.5,924.7A4.0,4.0 0 0 1 35.5,916.7Z" fill="#000"/><circle cx="35.5" cy="920.7" r="1.2" fill="#000"/><circle cx="35.5" cy="928.7" r="1.2" fill="#fff"/></g>
<path d="M29.6,958.6V974.2M33.6,958.6V974.2M38,958.6V974.2M42.4,958.6V974.2M28.2,960H43.8M28.2,964.6H43.8M28.2,968.9H43.8M28.2,972.9H43.8" stroke="#4a4a4a" stroke-width="1"/>
<path d="M31.1,1002.2V1017.3M28,1005.3H43.6" stroke="#fff" stroke-width="1.4"/>
<path d="M28,1048.9H43.6M28,1057.2H43.6" stroke="#1717c8" stroke-width="1.3" stroke-dasharray="2.6,1.6"/>
<path d="M35.6,1045.2V1052.6M35.6,1053.6V1061" stroke="#1717c8" stroke-width="1.3" stroke-dasharray="2.2,1.2"/>
<path d="M30,1086.9H35.8V1089.2H44.1V1094.7H35.8V1103.3H30V1094.7H26.9V1089.2H30Z" fill="#2da22d"/>
<path d="M28,1090.6H44M28,1093.4H44M31.4,1087V1103M34.4,1087V1103" stroke="#0f7f16" stroke-width="0.9" stroke-dasharray="1.2,1.2"/>
</svg>
<svg width="2048" height="140" viewBox="0 0 2048 140" style="font-family:'Liberation Sans',sans-serif">
<path d="M42.6,8.4c0.2,-2 1.8,-3.8 3.6,-4.3c0.3,2.1 -1.5,4.2 -3.6,4.3zM46.9,14.5c0,-2 1.2,-3.2 2.4,-3.9c-1,-1.4 -2.5,-2 -3.9,-2c-1.7,0 -2.6,0.9 -3.8,0.9c-1.3,0 -2.4,-0.9 -3.9,-0.9c-2.6,0 -5.2,2.2 -5.2,6.4c0,4 2.9,9.6 5.4,9.6c1.2,0 2,-0.8 3.5,-0.8c1.5,0 2,0.8 3.5,0.8c2,0 3.8,-3 4.6,-5.4c-1.5,-0.6 -2.6,-2.2 -2.6,-4.7z" fill="#3a3a3a"/>
<circle cx="1952.7" cy="14.1" r="2.2" fill="#111"/>
<circle cx="1960.9" cy="14.1" r="2.2" fill="#111"/>
<circle cx="1969.2" cy="14.1" r="2.2" fill="#111"/>
<rect x="1990" y="8.65" width="2.4" height="2.5" fill="#bebebe"/><rect x="1995.4" y="8.65" width="19.5" height="2.5" fill="#bebebe"/>
<rect x="1990" y="14.25" width="2.4" height="2.5" fill="#bebebe"/><rect x="1995.4" y="14.25" width="15.2" height="2.5" fill="#bebebe"/>
<rect x="1990" y="20.05" width="2.4" height="2.5" fill="#bebebe"/><rect x="1995.4" y="20.05" width="19.5" height="2.5" fill="#bebebe"/>
<path d="M919.2,42.2V54.2L922,51.6L924,55.8L925.8,55L923.9,50.9L927.6,50.6Z" fill="#3b7fd4"/>
<g transform="translate(344.4,87.3) rotate(-50) scale(0.72)" fill="none" stroke="#1f5fb8" stroke-linecap="butt"><path d="M15.5,-5.4C9.5,-5.6 3.5,-2.6 0,0C3.5,2.6 9.5,5.6 15.5,5.4" stroke-width="1.5" stroke-linejoin="round"/><path d="M0,0L5.2,-2.7V2.7Z" fill="#1f5fb8" stroke-width="0.6"/><path d="M14.5,-4.4H25.6M14.5,4.4H25.6" stroke-width="3.4"/><path d="M16.5,-4.4H26M16.5,4.4H26" stroke="#fdfdf0" stroke-width="0.7"/><path d="M16,-2.6C12.5,-3 11,-1 13.2,0C11,1 12.5,3 16,2.6" stroke-width="1.2"/></g>
<path d="M737.4,75.6L746,84.4M746,75.6L737.4,84.4" stroke="#6e6e6e" stroke-width="1.2"/>
<rect x="979.4" y="73.6" width="5.4" height="5.4" fill="#4b8edb"/>
<rect x="985.9" y="73.6" width="5.4" height="5.4" fill="#4b8edb"/>
<rect x="979.4" y="80.1" width="5.4" height="5.4" fill="#4b8edb"/>
<rect x="985.9" y="80.1" width="5.4" height="5.4" fill="#4b8edb"/>
<rect x="88.2" y="106.3" width="8.2" height="17.6" fill="#6e6e6e"/><path d="M97.5,106.8H107.6V123.4H97.5" fill="none" stroke="#333" stroke-width="1.2" stroke-dasharray="1.3,1.3"/>
<path d="M137.2,119.2H155.4" stroke="#000" stroke-width="2"/>
<rect x="140.5" y="109.2" width="2" height="2" fill="#000"/>
<rect x="140.5" y="112.4" width="2" height="2" fill="#000"/>
<rect x="140.5" y="115.4" width="2" height="2" fill="#000"/>
<rect x="140.5" y="121.4" width="2" height="2" fill="#000"/>
<rect x="150.6" y="109.2" width="2" height="2" fill="#000"/>
<rect x="150.6" y="112.4" width="2" height="2" fill="#000"/>
<rect x="150.6" y="115.4" width="2" height="2" fill="#000"/>
<rect x="150.6" y="121.4" width="2" height="2" fill="#000"/>
<path d="M184.6,109.4H188.2L185.6,115.2L188.2,120.8H184.6A1.3,1.3 0 0 1 183.3,119.5V110.7A1.3,1.3 0 0 1 184.6,109.4ZM190.8,109.4H194.5A1.3,1.3 0 0 1 195.8,110.7V119.5A1.3,1.3 0 0 1 194.5,120.8H190.8L188,115.2Z" fill="#fff"/>
<text x="231.8" y="120.5" font-size="11.6" font-weight="bold" text-anchor="middle" fill="#000" stroke="#000" stroke-width="0.45">M</text><text x="231.8" y="111.2" font-size="6.2" font-weight="bold" text-anchor="middle" fill="#a01818">K</text>
<rect x="931.6" y="109.8" width="7.6" height="7.6" fill="none" stroke="#333" stroke-width="1.3"/><rect x="936" y="113.5" width="7.6" height="7.6" fill="#fff" stroke="#333" stroke-width="1.3"/>
<path d="M993.3,116.4L997,110.9L1003.1,118.1L1007.2,114.4" fill="none" stroke="#222" stroke-width="1.3"/><rect x="995.7" y="109.6" width="2.6" height="2.6" fill="#111"/><rect x="1001.8" y="116.8" width="2.6" height="2.6" fill="#111"/>
<rect x="1086.2" y="111.2" width="9.4" height="9.2" fill="none" stroke="#222" stroke-width="1.3" stroke-dasharray="1.4,1.3"/><path d="M1086,120.6h4.4l-1.5,-1.4l2.6,-2.6l-1.4,-1.4l-2.6,2.6l-1.5,-1.5z" fill="#111"/>
<rect x="1208.3" y="111.2" width="9.4" height="9.2" fill="none" stroke="#222" stroke-width="1.3" stroke-dasharray="1.4,1.3"/><path d="M1218,111h-4.4l1.5,1.4l-2.6,2.6l1.4,1.4l2.6,-2.6l1.5,1.5z" fill="#111"/>
<path d="M1342.3,111.4V119.8M1356.6,111.4V119.8M1344.5,115.6H1354.4" stroke="#222" stroke-width="1.3" fill="none"/><path d="M1343.2,115.6l3.4,-2.4v4.8zM1355.7,115.6l-3.4,-2.4v4.8z" fill="#222"/>
<path d="M1419.8,108H1427.4M1419.8,122.6H1427.4M1423.6,110.4V120.2" stroke="#222" stroke-width="1.3" fill="none"/><path d="M1423.6,109l-2.5,3.4h5zM1423.6,121.6l-2.5,-3.4h5z" fill="#222"/>
<rect x="1646.5" y="119.6" width="18" height="3.7" fill="#fff" stroke="#111" stroke-width="1.7"/>
<path d="M1648.3,119.6V117.3a1.3,1.3 0 0 1 1.3,-1.3h1.6a1.3,1.3 0 0 1 1.3,1.3h0.9a1.3,1.3 0 0 1 1.3,-1.3h1.6a1.3,1.3 0 0 1 1.3,1.3h0.9a1.3,1.3 0 0 1 1.3,-1.3h1.6a1.3,1.3 0 0 1 1.3,1.3V119.6Z" fill="#111"/>
<rect x="1652.4" y="109.2" width="6.4" height="4.6" rx="0.6" fill="#fff" stroke="#111" stroke-width="1.7"/><rect x="1653.9" y="106.5" width="3.4" height="2.6" rx="0.6" fill="#111"/>
<g transform="translate(1695.2,114.8) rotate(-38)"><rect x="-10.6" y="-6.6" width="21.2" height="13.2" rx="6.6" fill="none" stroke="#111" stroke-width="1.6"/><path d="M-9.6,3.2L9.6,3.2" stroke="#111" stroke-width="1.3" transform="rotate(-4)"/><circle cx="-3" cy="-2.4" r="0.8" fill="#111"/><circle cx="2" cy="-3.4" r="0.8" fill="#111"/><circle cx="-6" cy="-0.4" r="0.7" fill="#111"/></g>
<rect x="1725.4" y="107.4" width="12" height="12" fill="none" stroke="#111" stroke-width="1.5"/><rect x="1721.4" y="111.2" width="12" height="12" fill="#e3e3e4" fill-opacity="0.6" stroke="#111" stroke-width="1.5"/><rect x="1726.2" y="112" width="6.6" height="6.8" fill="#b8b8b8" opacity="0.7"/>
<g transform="translate(1768,114.6) rotate(38)"><path d="M-6.5,-3.4H3.2L7,0L3.2,3.4H-6.5Z" fill="#e3e3e4" stroke="#111" stroke-width="1.4" stroke-linejoin="round"/><circle cx="-4" cy="0" r="0.8" fill="#111"/></g><path d="M1762.6,115.4L1759.4,120.4L1762.2,121.6ZM1765.2,117.4L1763.2,122L1766.2,122.4Z" fill="#111"/>
<path d="M1795.4,108.2V124.8" stroke="#111" stroke-width="1.5"/><path d="M1796.2,108.6H1807.6L1804.4,112.8L1807.6,117H1796.2Z" fill="#c4202a"/>
<path d="M1818.2,126.2L1840.4,104" stroke="#cc1c1c" stroke-width="2.6" stroke-linecap="round"/><path d="M1851,111.8H1858.2L1854.6,117.9Z" fill="#8a8a8a"/>
</svg>
</div></body></html>
